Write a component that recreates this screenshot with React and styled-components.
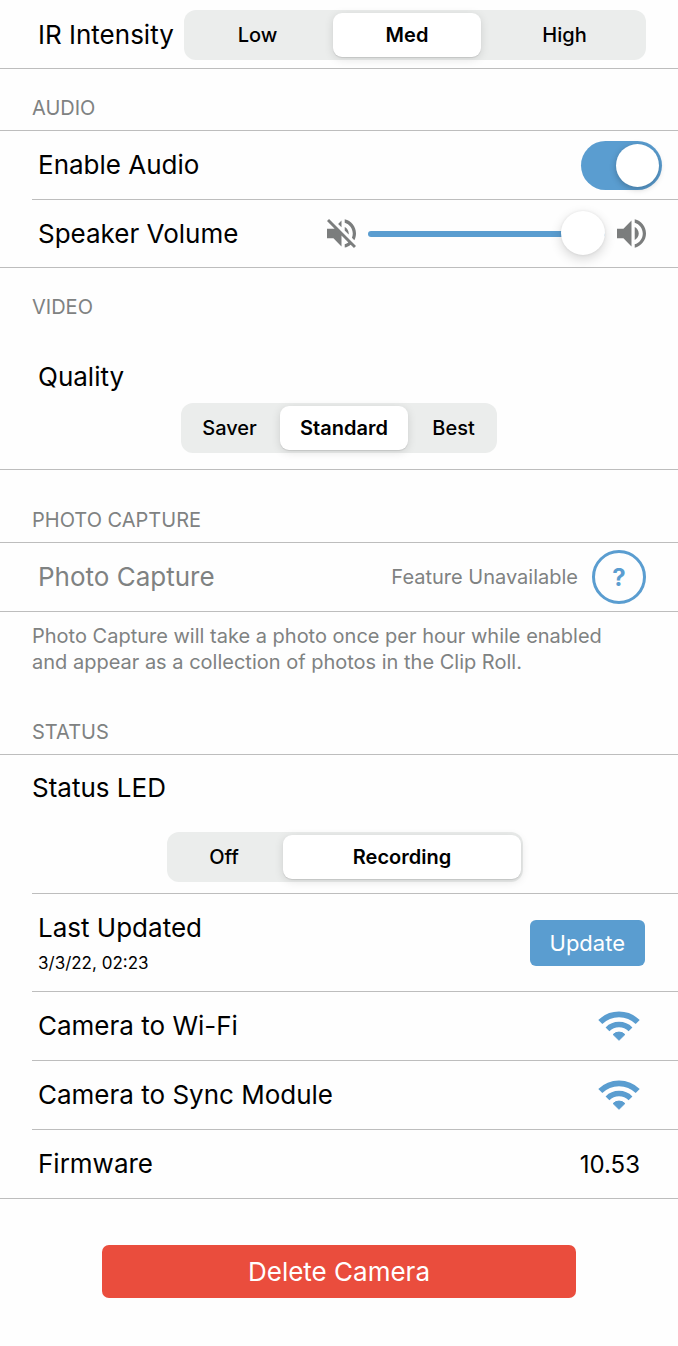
import React, { useState } from "react";
import styled, { createGlobalStyle } from "styled-components";

const colors = {
  blue: "#5a9dd0",
  red: "#ea4d3d",
  grey: "#7f8282",
  icon: "#7b7d7d",
  line: "#bdbdbd",
  track: "#ebedec",
};

const SegmentedControl = ({ name, labelId, options, columns, value, onChange }) => (
  <Segments role="radiogroup" aria-labelledby={labelId} $columns={columns}>
    {options.map((option) => (
      <Segment key={option} $active={option === value}>
        <input
          type="radio"
          name={name}
          value={option}
          checked={option === value}
          onChange={() => onChange(option)}
        />
        {option}
      </Segment>
    ))}
  </Segments>
);

const VolumeOffIcon = () => (
  <VolumeSvg viewBox="3 3 18 18" aria-hidden="true">
    <path d="M16.5 12c0-1.77-1.02-3.29-2.5-4.03v2.21l2.45 2.45c.03-.2.05-.41.05-.63zm2.5 0c0 .94-.2 1.82-.54 2.64l1.51 1.51C20.63 14.91 21 13.5 21 12c0-4.28-2.99-7.86-7-8.77v2.06c2.89.86 5 3.54 5 6.71zM4.27 3L3 4.27 7.73 9H3v6h4l5 5v-6.73l4.25 4.25c-.67.52-1.42.93-2.25 1.18v2.06c1.38-.31 2.63-.95 3.69-1.81L19.73 21 21 19.73l-9-9L4.27 3zM12 4L9.91 6.09 12 8.18V4z" />
  </VolumeSvg>
);

const VolumeUpIcon = () => (
  <VolumeSvg viewBox="3 3 18 18" aria-hidden="true">
    <path d="M3 9v6h4l5 5V4L7 9H3zm13.5 3c0-1.77-1.02-3.29-2.5-4.03v8.05c1.48-.73 2.5-2.25 2.5-4.02zM14 3.23v2.06c2.89.86 5 3.54 5 6.71s-2.11 5.85-5 6.71v2.06c4.01-.91 7-4.49 7-8.77s-2.99-7.86-7-8.77z" />
  </VolumeSvg>
);

const WifiIcon = () => (
  <WifiSvg viewBox="0 0 42 30" role="img" aria-label="Strong signal">
    <path d="M2.3 11.1A26.5 26.5 0 0 1 39.7 11.1" strokeWidth="5.7" />
    <path d="M9.5 18.3A16.3 16.3 0 0 1 32.5 18.3" strokeWidth="5.4" />
    <path
      d="M21 29.3 15.1 23.5A8.4 8.4 0 0 1 26.9 23.5Z"
      fill={colors.blue}
      strokeWidth="1"
      strokeLinejoin="round"
    />
  </WifiSvg>
);

const App = () => {
  const [intensity, setIntensity] = useState("Med");
  const [audio, setAudio] = useState(true);
  const [volume, setVolume] = useState(100);
  const [quality, setQuality] = useState("Standard");
  const [led, setLed] = useState("Recording");

  return (
    <Wrapper>
      <GlobalStyle />
      <Group>
        <IntensityRow>
          <Label id="ir-label">IR Intensity</Label>
          <SegmentedControl
            name="intensity"
            labelId="ir-label"
            options={["Low", "Med", "High"]}
            columns="143fr 148fr 159fr"
            value={intensity}
            onChange={setIntensity}
          />
        </IntensityRow>
      </Group>

      <SectionTitle $line>AUDIO</SectionTitle>
      <Group>
        <ToggleRow>
          <Label as="label" htmlFor="audio">
            Enable Audio
          </Label>
          <Toggle
            id="audio"
            type="checkbox"
            role="switch"
            checked={audio}
            onChange={(e) => setAudio(e.target.checked)}
          />
        </ToggleRow>
        <Row>
          <Label as="label" htmlFor="volume">
            Speaker Volume
          </Label>
          <VolumeControl>
            <VolumeOffIcon />
            <Slider
              id="volume"
              type="range"
              min="0"
              max="100"
              value={volume}
              style={{ "--level": `${volume}%` }}
              onChange={(e) => setVolume(Number(e.target.value))}
            />
            <VolumeUpIcon />
          </VolumeControl>
        </Row>
      </Group>

      <SectionTitle>VIDEO</SectionTitle>
      <Group>
        <QualityBlock>
          <Label id="quality-label">Quality</Label>
          <ControlSlot $width="316px">
            <SegmentedControl
              name="quality"
              labelId="quality-label"
              options={["Saver", "Standard", "Best"]}
              columns="93fr 128fr 83fr"
              value={quality}
              onChange={setQuality}
            />
          </ControlSlot>
        </QualityBlock>
      </Group>

      <SectionTitle $line $spaced>
        PHOTO CAPTURE
      </SectionTitle>
      <Group>
        <Row>
          <Label $muted>Photo Capture</Label>
          <Unavailable>
            Feature Unavailable
            <HelpButton type="button" aria-label="About Photo Capture">
              ?
            </HelpButton>
          </Unavailable>
        </Row>
      </Group>
      <Footnote>
        Photo Capture will take a photo once per hour while enabled and appear
        as a collection of photos in the Clip Roll.
      </Footnote>

      <SectionTitle $line>STATUS</SectionTitle>
      <Group>
        <LedBlock>
          <Label id="led-label">Status LED</Label>
          <ControlSlot $width="356px">
            <SegmentedControl
              name="led"
              labelId="led-label"
              options={["Off", "Recording"]}
              columns="110fr 238fr"
              value={led}
              onChange={setLed}
            />
          </ControlSlot>
        </LedBlock>
        <UpdatedRow>
          <div>
            <Label>Last Updated</Label>
            <Timestamp>3/3/22, 02:23</Timestamp>
          </div>
          <UpdateButton type="button">Update</UpdateButton>
        </UpdatedRow>
        <StatusRow>
          <Label>Camera to Wi-Fi</Label>
          <WifiIcon />
        </StatusRow>
        <StatusRow>
          <Label>Camera to Sync Module</Label>
          <WifiIcon />
        </StatusRow>
        <StatusRow>
          <Label>Firmware</Label>
          <Value>10.53</Value>
        </StatusRow>
      </Group>

      <DeleteButton type="button">Delete Camera</DeleteButton>
    </Wrapper>
  );
};

export default App;

const GlobalStyle = createGlobalStyle`
  * {
    box-sizing: border-box;
  }

  body {
    margin: 0;
    background: #fefefe;
    color: #000;
    font-family: Inter, "Liberation Sans", sans-serif;
  }

  button, input {
    font-family: inherit;
  }
`;

const Wrapper = styled.main`
  display: flex;
  flex-direction: column;
  width: 100%;
  padding-bottom: 48px;
`;

const Group = styled.section`
  border-bottom: 1px solid ${colors.line};

  & > * + * {
    border-top: 1px solid ${colors.line};
  }
`;

const SectionTitle = styled.h2`
  margin: 0;
  padding: ${(props) => (props.$spaced ? "37px" : "26px")} 32px 9px;
  border-bottom: ${(props) => (props.$line ? `1px solid ${colors.line}` : "none")};
  color: ${colors.grey};
  font-size: 20px;
  font-weight: 400;
  line-height: 26px;
`;

const Row = styled.div`
  display: flex;
  align-items: center;
  justify-content: space-between;
  min-height: 68px;
  margin-left: 32px;
  padding: 0 32px 0 6px;
`;

const IntensityRow = styled(Row)`
  padding-top: 2px;
`;

const ToggleRow = styled(Row)`
  padding-right: 16px;
`;

const StatusRow = styled(Row)`
  min-height: 69px;
  padding-right: 38px;
`;

const UpdatedRow = styled(Row)`
  padding: 18px 33px 17px 6px;
`;

const QualityBlock = styled.div`
  display: flex;
  flex-direction: column;
  gap: 10px;
  padding: 32px 38px 16px;
`;

const LedBlock = styled.div`
  display: flex;
  flex-direction: column;
  gap: 28px;
  margin-left: 32px;
  padding: 17px 20px 11px 0;
`;

const Label = styled.div`
  min-width: 146px;
  color: ${(props) => (props.$muted ? colors.grey : "#000")};
  font-size: 26px;
  line-height: 32px;
  white-space: nowrap;
`;

const ControlSlot = styled.div`
  display: flex;
  align-self: center;
  width: ${(props) => props.$width};
  max-width: 100%;
`;

const Segments = styled.div`
  display: grid;
  flex: 1;
  grid-template-columns: ${(props) => props.$columns};
  gap: 4px;
  height: 50px;
  padding: 3px 2px;
  border-radius: 12px;
  background: ${colors.track};
`;

const Segment = styled.label`
  position: relative;
  display: flex;
  align-items: center;
  justify-content: center;
  border-radius: 9px;
  background: ${(props) => (props.$active ? "#fff" : "transparent")};
  box-shadow: ${(props) =>
    props.$active
      ? "0 1px 1px rgba(0, 0, 0, 0.1), 0 2px 10px rgba(0, 0, 0, 0.12)"
      : "none"};
  font-size: 20px;
  font-weight: ${(props) => (props.$active ? 600 : 500)};
  cursor: pointer;

  input {
    position: absolute;
    inset: 0;
    margin: 0;
    opacity: 0;
    cursor: pointer;
  }
`;

const Toggle = styled.input`
  appearance: none;
  width: 81px;
  height: 49px;
  margin: 0;
  padding: 3px;
  border-radius: 25px;
  background: ${(props) => (props.checked ? colors.blue : colors.track)};
  cursor: pointer;

  &::before {
    content: "";
    display: block;
    width: 43px;
    height: 43px;
    margin-left: ${(props) => (props.checked ? "32px" : "0")};
    border-radius: 50%;
    background: #fff;
    box-shadow: 0 2px 6px rgba(0, 0, 0, 0.25);
  }
`;

const VolumeControl = styled.div`
  display: flex;
  align-items: center;
  gap: 12px;
`;

const VolumeSvg = styled.svg`
  width: 29px;
  height: 29px;
  fill: ${colors.icon};
`;

const Slider = styled.input`
  appearance: none;
  width: 237px;
  height: 44px;
  margin: 0;
  background: transparent;
  cursor: pointer;

  &::-webkit-slider-runnable-track {
    height: 6px;
    border-radius: 3px;
    background: linear-gradient(
      to right,
      ${colors.blue} var(--level),
      ${colors.track} var(--level)
    );
  }

  &::-webkit-slider-thumb {
    appearance: none;
    width: 44px;
    height: 44px;
    margin-top: -20px;
    border-radius: 50%;
    background: #fff;
    box-shadow: 0 4px 12px rgba(0, 0, 0, 0.16), 0 0 3px rgba(0, 0, 0, 0.08);
  }
`;

const Unavailable = styled.div`
  display: flex;
  align-items: center;
  gap: 14px;
  color: ${colors.grey};
  font-size: 20px;
`;

const HelpButton = styled.button`
  width: 54px;
  height: 54px;
  padding: 0;
  border: 3px solid ${colors.blue};
  border-radius: 50%;
  background: transparent;
  color: ${colors.blue};
  font-size: 24px;
  font-weight: 700;
  cursor: pointer;
`;

const Footnote = styled.p`
  margin: 0;
  padding: 11px 48px 18px 32px;
  color: ${colors.grey};
  font-size: 20px;
  line-height: 26px;
`;

const Timestamp = styled.div`
  margin-top: 8px;
  font-size: 17px;
  line-height: 22px;
`;

const UpdateButton = styled.button`
  height: 46px;
  padding: 0 20px;
  border: none;
  border-radius: 6px;
  background: ${colors.blue};
  color: #fff;
  font-size: 22px;
  cursor: pointer;
`;

const WifiSvg = styled.svg`
  width: 42px;
  height: 30px;
  fill: none;
  stroke: ${colors.blue};
`;

const Value = styled.span`
  font-size: 24px;
`;

const DeleteButton = styled.button`
  align-self: center;
  width: 70%;
  height: 53px;
  margin-top: 46px;
  border: none;
  border-radius: 7px;
  background: ${colors.red};
  color: #fff;
  font-size: 26px;
  cursor: pointer;
`;
